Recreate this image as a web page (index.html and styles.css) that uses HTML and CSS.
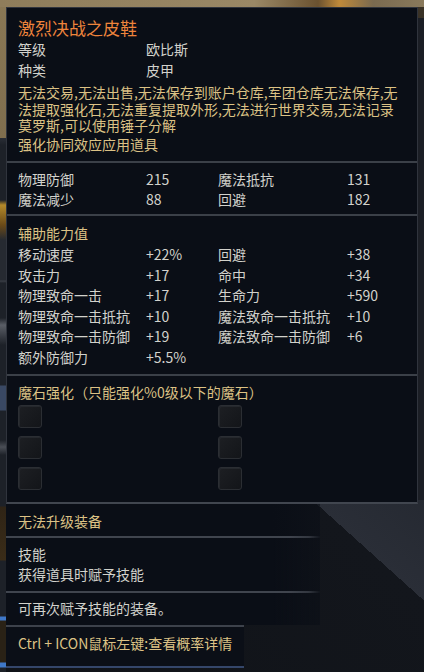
FILE: index.html
```html
<!DOCTYPE html>
<html lang="zh-CN">
<head>
<meta charset="utf-8">
<title>激烈决战之皮鞋</title>
<link rel="stylesheet" href="styles.css">
</head>
<body>
<div class="tooltip">
  <div class="main">
    <section class="sec head">
      <div class="title">激烈决战之皮鞋</div>
      <div class="kv"><span>等级</span><span>欧比斯</span></div>
      <div class="kv"><span>种类</span><span>皮甲</span></div>
      <p class="desc gold">无法交易,无法出售,无法保存到账户仓库,军团仓库无法保存,无<br>法提取强化石,无法重复提取外形,无法进行世界交易,无法记录<br>莫罗斯,可以使用锤子分解</p>
      <div class="gold l21">强化协同效应应用道具</div>
    </section>
    <section class="sec stats">
      <div class="grid">
        <span>物理防御</span><span>215</span><span>魔法抵抗</span><span>131</span>
        <span>魔法减少</span><span>88</span><span>回避</span><span>182</span>
      </div>
    </section>
    <section class="sec aux">
      <div class="gold auxhead">辅助能力值</div>
      <div class="grid grid-aux">
        <span>移动速度</span><span>+22%</span><span>回避</span><span>+38</span>
        <span>攻击力</span><span>+17</span><span>命中</span><span>+34</span>
        <span>物理致命一击</span><span>+17</span><span>生命力</span><span>+590</span>
        <span>物理致命一击抵抗</span><span>+10</span><span>魔法致命一击抵抗</span><span>+10</span>
        <span>物理致命一击防御</span><span>+19</span><span>魔法致命一击防御</span><span>+6</span>
        <span>额外防御力</span><span>+5.5%</span>
      </div>
    </section>
    <section class="sec stones">
      <div class="gold l20">魔石强化（只能强化%0级以下的魔石）</div>
      <div class="sockets">
        <i class="socket"></i><i class="socket"></i>
        <i class="socket"></i><i class="socket"></i>
        <i class="socket"></i><i class="socket"></i>
      </div>
    </section>
  </div>
  <section class="sub s5"><div class="gold l20">无法升级装备</div></section>
  <section class="sub s6 fade"><div class="l20">技能</div><div class="l20">获得道具时赋予技能</div></section>
  <section class="sub s7 fade"><div class="l20">可再次赋予技能的装备。</div></section>
  <section class="sub s8"><div class="gold l20">Ctrl + ICON鼠标左键:查看概率详情</div></section>
</div>
</body>
</html>
```
FILE: styles.css
```css
html, body {
  margin: 0;
  padding: 0;
}
body {
  width: 424px;
  height: 672px;
  overflow: hidden;
  font-family: "Noto Sans CJK SC", "Noto Sans", sans-serif;
  font-size: 14px;
  color: #d2d2cc;
  background:
    linear-gradient(90deg, #8f7d5b 0, #9a8866 60%, #6b5230 75%, #c08a3a 80%, #7a6a50 88%, #8a7a5c 100%) no-repeat 0 0 / 424px 7px,
    linear-gradient(to bottom, #8a7855 0, #7f6e4e 138px, #2a2e36 138px, #1d2128 145px, #1d2128 200px, #b48a2a 205px, #6a4a18 225px, #262a31 240px, #262a31 280px, #3a3e46 281px, #1d2128 283px, #1d2128 318px, #5a5e66 325px, #1d2128 345px, #1d2128 385px, #394863 386px, #394863 410px, #1d2128 411px, #1d2128 440px, #4a4e56 447px, #1d2128 455px, #1d2128 506px, #2f2416 507px, #3a2c18 560px, #1d2128 561px, #1d2128 616px, #3f78c8 617px, #3f78c8 620px, #2a2216 621px, #2a2216 662px, #3f78c8 663px, #3f78c8 667px, #1d2128 668px) no-repeat 0 0 / 6px 672px,
    linear-gradient(to bottom, #3a3226 0, #3a3226 18px, #1b1e25 18px, #1b1e25 500px) no-repeat 418px 0 / 6px 500px,
    linear-gradient(42deg, #101318 0, #13161c 43%, #2a2e37 43%, #22262e 60%, #1a1d24 100%);
}
.tooltip {
  margin: 7px 0 0 6px;
  width: 412px;
}
.main {
  width: 412px;
  box-sizing: border-box;
  background: #0a0e16;
  border: 1px solid #30343d;
  border-bottom: 2px solid #41464f;
}
.sec {
  padding: 0 11px;
}
.sec + .sec {
  border-top: 2px solid #3b4048;
}
.head {
  padding-top: 9px;
  padding-bottom: 6.5px;
}
.title {
  font-size: 17px;
  line-height: 22px;
  color: #ee843c;
}
.kv {
  display: grid;
  grid-template-columns: 128px 1fr;
  line-height: 21px;
}
.desc {
  margin: 3px 0 0;
  line-height: 16.5px;
  white-space: nowrap;
}
.gold {
  color: #dcc285;
}
.l21 { line-height: 21px; }
.l20 { line-height: 20px; white-space: nowrap; }
.grid {
  display: grid;
  grid-template-columns: 128px 72px 129px 1fr;
  line-height: 20px;
  white-space: nowrap;
}
.stats {
  padding-top: 6px;
  padding-bottom: 5px;
}
.aux {
  padding-top: 6px;
  padding-bottom: 6px;
}
.auxhead {
  line-height: 22px;
}
.grid-aux {
  line-height: 20.6px;
}
.stones {
  padding-top: 6.4px;
  padding-bottom: 12px;
}
.sockets {
  margin-top: 3px;
  display: grid;
  grid-template-columns: 200px 24px;
  grid-auto-rows: 23px;
  row-gap: 8px;
}
.socket {
  display: block;
  width: 24px;
  height: 23px;
  box-sizing: border-box;
  border-radius: 3px;
  border: 1px solid #2b2e33;
  background: linear-gradient(135deg, #1d1f23, #131519);
  box-shadow: inset 1px 1px 0 #25282d;
}
.sub {
  box-sizing: border-box;
  padding: 0 12px;
  background: #0a0e16;
}
.s5 {
  width: 314px;
  padding-top: 7px;
  padding-bottom: 5px;
  background: linear-gradient(90deg, #0a0e16 85%, rgba(10,14,22,0.6) 100%);
}
.fade {
  width: 314px;
  border-top: 2px solid transparent;
  border-image: linear-gradient(90deg, #40454e 0, #40454e 90%, rgba(90,95,105,0.5) 96%, rgba(60,64,72,0) 100%) 1;
  background: linear-gradient(90deg, #0a0e16 85%, rgba(10,14,22,0.6) 100%);
}
.s6 {
  padding-top: 6px;
  padding-bottom: 7px;
}
.s7 {
  padding-top: 5px;
  padding-bottom: 7px;
}
.s8 {
  width: 238px;
  padding-top: 6px;
  padding-bottom: 13px;
  border-top: 2px solid #3d424b;
  border-bottom: 2px solid #34466a;
  background: #0b0f17;
}
```
